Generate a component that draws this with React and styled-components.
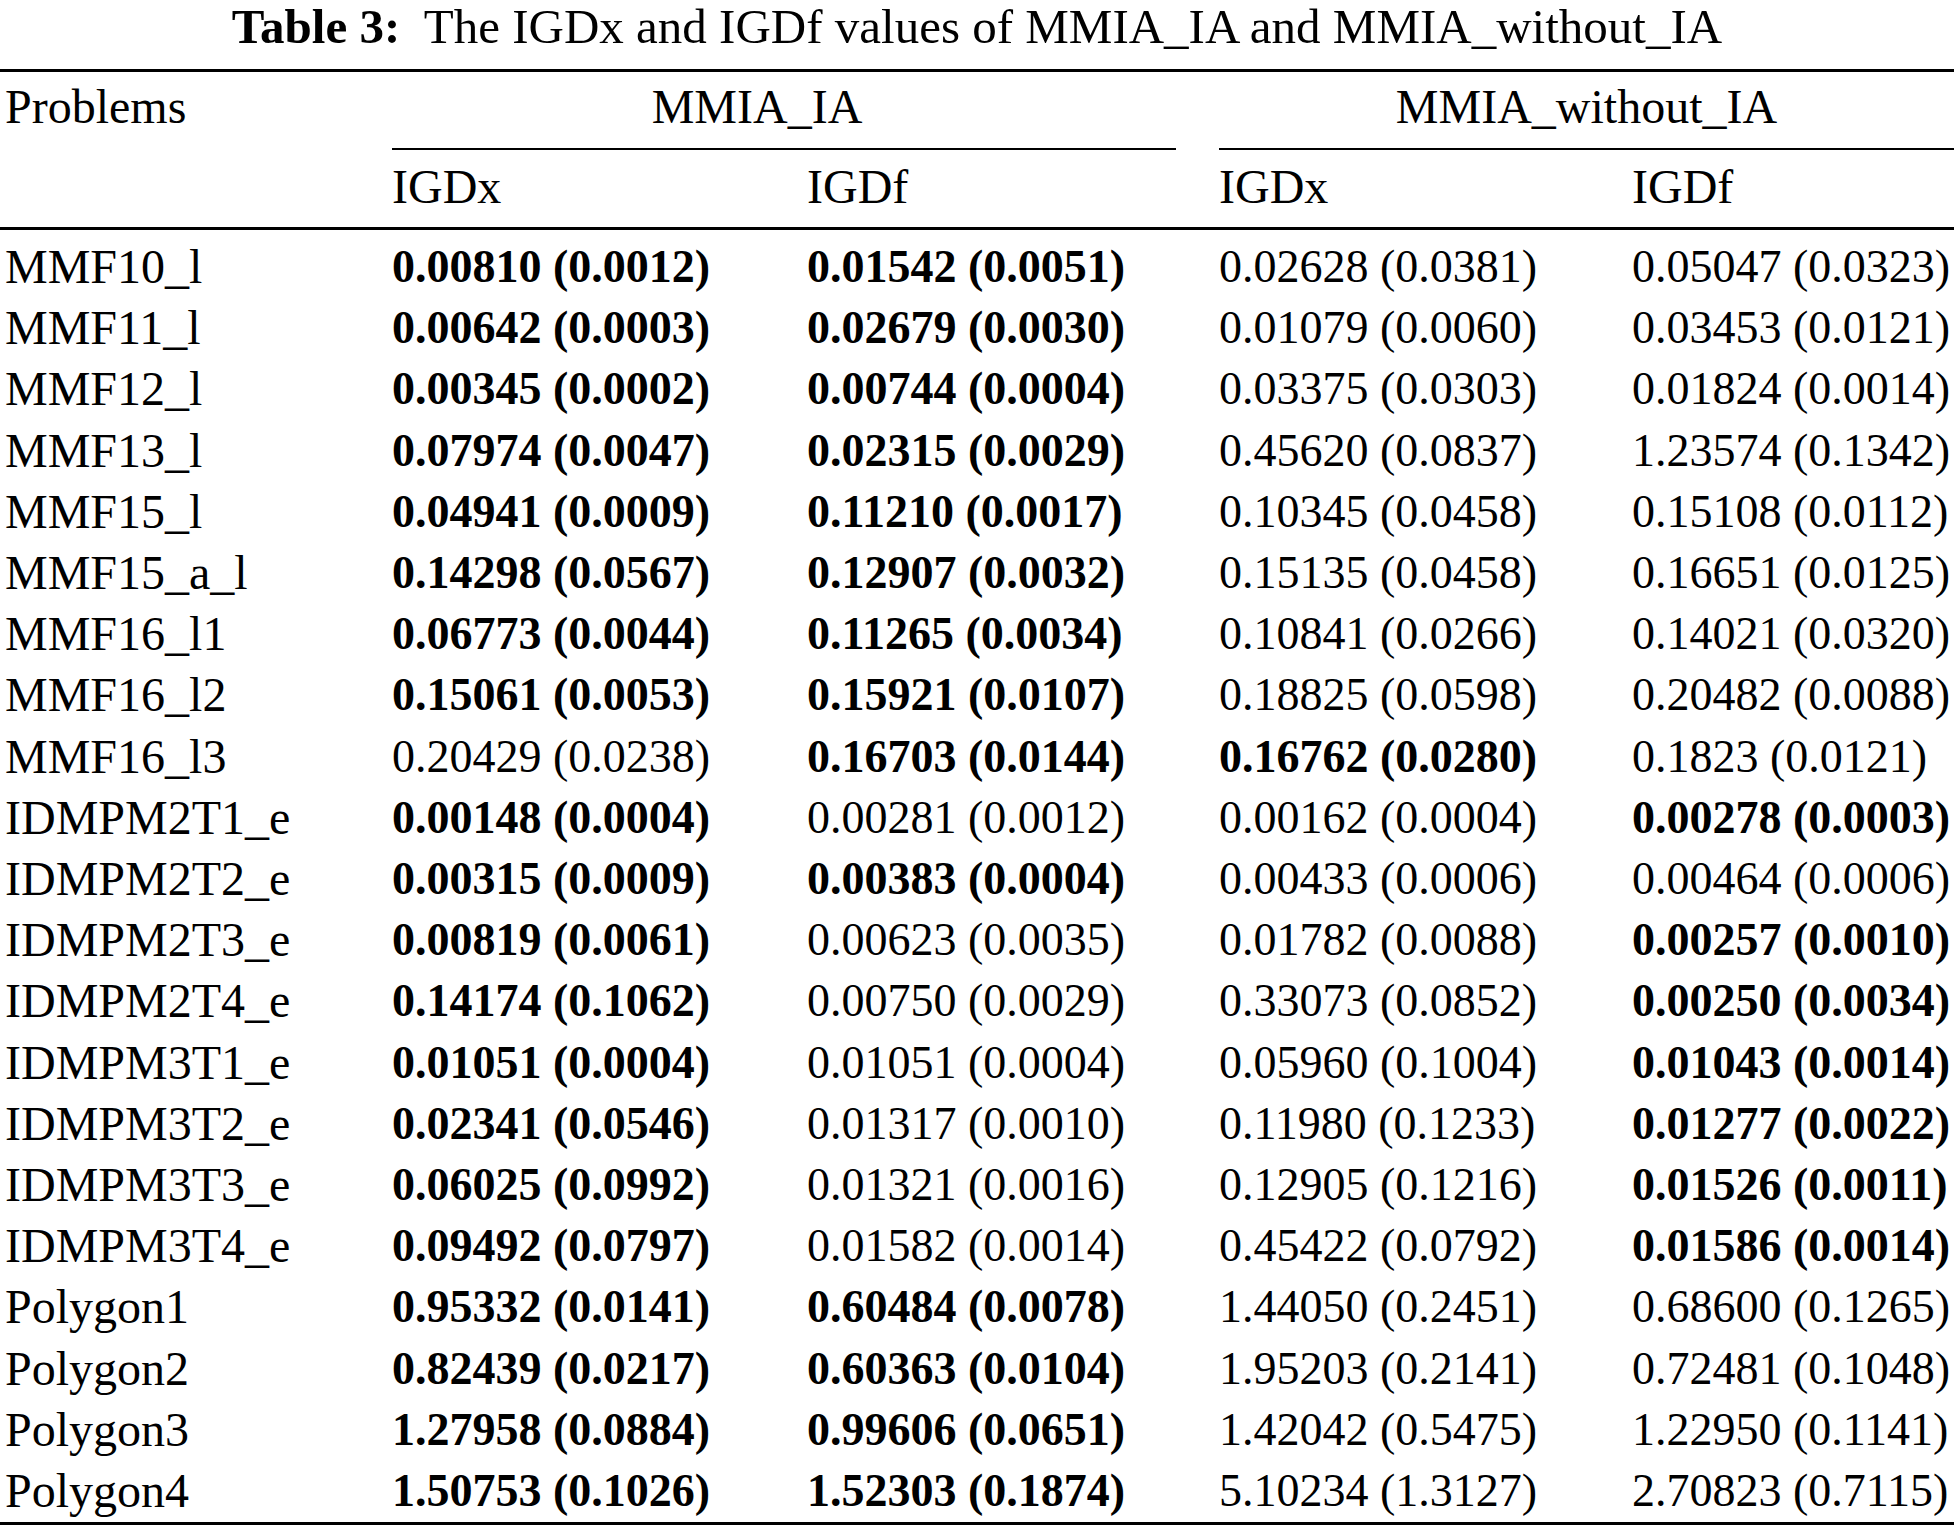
import styled, { createGlobalStyle } from "styled-components";

const GlobalStyle = createGlobalStyle`
  html, body {
    margin: 0;
    padding: 0;
    background: #fff;
  }
  body {
    font-family: "Liberation Serif", "Times New Roman", serif;
    color: #000;
  }
`;

// "*" in front of a value means it is printed bold (best result)
const rows = [
  ["MMF10_l", "*0.00810 (0.0012)", "*0.01542 (0.0051)", "0.02628 (0.0381)", "0.05047 (0.0323)"],
  ["MMF11_l", "*0.00642 (0.0003)", "*0.02679 (0.0030)", "0.01079 (0.0060)", "0.03453 (0.0121)"],
  ["MMF12_l", "*0.00345 (0.0002)", "*0.00744 (0.0004)", "0.03375 (0.0303)", "0.01824 (0.0014)"],
  ["MMF13_l", "*0.07974 (0.0047)", "*0.02315 (0.0029)", "0.45620 (0.0837)", "1.23574 (0.1342)"],
  ["MMF15_l", "*0.04941 (0.0009)", "*0.11210 (0.0017)", "0.10345 (0.0458)", "0.15108 (0.0112)"],
  ["MMF15_a_l", "*0.14298 (0.0567)", "*0.12907 (0.0032)", "0.15135 (0.0458)", "0.16651 (0.0125)"],
  ["MMF16_l1", "*0.06773 (0.0044)", "*0.11265 (0.0034)", "0.10841 (0.0266)", "0.14021 (0.0320)"],
  ["MMF16_l2", "*0.15061 (0.0053)", "*0.15921 (0.0107)", "0.18825 (0.0598)", "0.20482 (0.0088)"],
  ["MMF16_l3", "0.20429 (0.0238)", "*0.16703 (0.0144)", "*0.16762 (0.0280)", "0.1823 (0.0121)"],
  ["IDMPM2T1_e", "*0.00148 (0.0004)", "0.00281 (0.0012)", "0.00162 (0.0004)", "*0.00278 (0.0003)"],
  ["IDMPM2T2_e", "*0.00315 (0.0009)", "*0.00383 (0.0004)", "0.00433 (0.0006)", "0.00464 (0.0006)"],
  ["IDMPM2T3_e", "*0.00819 (0.0061)", "0.00623 (0.0035)", "0.01782 (0.0088)", "*0.00257 (0.0010)"],
  ["IDMPM2T4_e", "*0.14174 (0.1062)", "0.00750 (0.0029)", "0.33073 (0.0852)", "*0.00250 (0.0034)"],
  ["IDMPM3T1_e", "*0.01051 (0.0004)", "0.01051 (0.0004)", "0.05960 (0.1004)", "*0.01043 (0.0014)"],
  ["IDMPM3T2_e", "*0.02341 (0.0546)", "0.01317 (0.0010)", "0.11980 (0.1233)", "*0.01277 (0.0022)"],
  ["IDMPM3T3_e", "*0.06025 (0.0992)", "0.01321 (0.0016)", "0.12905 (0.1216)", "*0.01526 (0.0011)"],
  ["IDMPM3T4_e", "*0.09492 (0.0797)", "0.01582 (0.0014)", "0.45422 (0.0792)", "*0.01586 (0.0014)"],
  ["Polygon1", "*0.95332 (0.0141)", "*0.60484 (0.0078)", "1.44050 (0.2451)", "0.68600 (0.1265)"],
  ["Polygon2", "*0.82439 (0.0217)", "*0.60363 (0.0104)", "1.95203 (0.2141)", "0.72481 (0.1048)"],
  ["Polygon3", "*1.27958 (0.0884)", "*0.99606 (0.0651)", "1.42042 (0.5475)", "1.22950 (0.1141)"],
  ["Polygon4", "*1.50753 (0.1026)", "*1.52303 (0.1874)", "5.10234 (1.3127)", "2.70823 (0.7115)"],
];

const App = () => {
  return (
    <>
      <GlobalStyle />
      <Page>
        <Caption>
          <CaptionLabel>Table 3:</CaptionLabel>
          {"\u00a0 The IGDx and IGDf values of MMIA_IA and MMIA_without_IA"}
        </Caption>

        <Head>
          <Label>Problems</Label>
          <GroupTitle $span="2 / 4" $trim="43px" $shift="54px">MMIA_IA</GroupTitle>
          <GroupTitle $span="4 / 6">MMIA_without_IA</GroupTitle>
          <SubTitle $col={2}>IGDx</SubTitle>
          <SubTitle $col={3}>IGDf</SubTitle>
          <SubTitle $col={4}>IGDx</SubTitle>
          <SubTitle $col={5}>IGDf</SubTitle>
        </Head>

        <Body>
          {rows.map(([name, ...values]) => (
            <Row key={name}>
              <Label>{name}</Label>
              {values.map((value, i) => {
                const bold = value.startsWith("*");
                return (
                  <Value key={i} $bold={bold}>
                    {bold ? value.slice(1) : value}
                  </Value>
                );
              })}
            </Row>
          ))}
        </Body>
      </Page>
    </>
  );
};

export default App;

const columns = "392px 415px 412px 413px 1fr";

const Page = styled.div`
  width: 1954px;
  font-size: 48px;
  line-height: 60.7px;
`;

const Caption = styled.div`
  height: 51px;
  margin-bottom: 18px;
  font-size: 49px;
  line-height: 54.3px;
  text-align: center;
  white-space: nowrap;
`;

const CaptionLabel = styled.span`
  font-weight: 700;
`;

const Head = styled.div`
  display: grid;
  grid-template-columns: ${columns};
  grid-template-rows: auto auto;
  row-gap: 7px;
  border-top: 3px solid #000;
  padding: 5px 0 9.6px;
`;

const GroupTitle = styled.div`
  grid-column: ${(p) => p.$span};
  grid-row: 1;
  margin-right: ${(p) => p.$trim || "0"};
  padding: 0 ${(p) => p.$shift || "0"} 10px 0;
  border-bottom: 2px solid #000;
  text-align: center;
  white-space: nowrap;
`;

const SubTitle = styled.div`
  grid-column: ${(p) => p.$col};
  grid-row: 2;
  white-space: nowrap;
`;

const Body = styled.div`
  border-top: 3px solid #000;
  border-bottom: 3px solid #000;
  padding: 6px 0 1px;
`;

const Row = styled.div`
  display: grid;
  grid-template-columns: ${columns};
  line-height: 61.2px;
`;

const Label = styled.div`
  padding-left: 5px;
  white-space: nowrap;
`;

const Value = styled.div`
  font-size: 46px;
  font-weight: ${(p) => (p.$bold ? 700 : 400)};
  white-space: nowrap;
`;
